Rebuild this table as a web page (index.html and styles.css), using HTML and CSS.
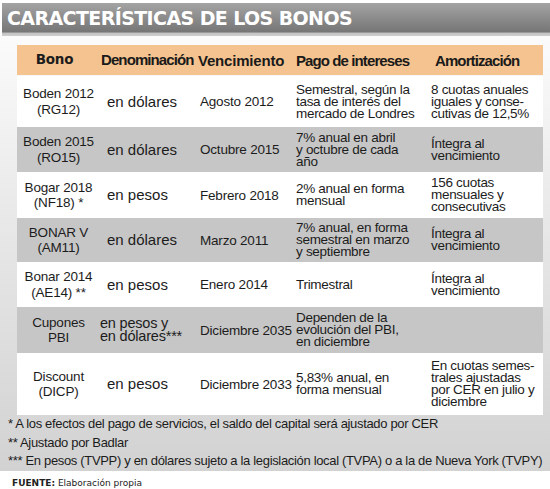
FILE: index.html
```html
<!DOCTYPE html>
<html lang="es">
<head>
<meta charset="utf-8">
<title>Características de los bonos</title>
<link rel="stylesheet" href="styles.css">
</head>
<body>
<div class="page">
  <div class="title">CARACTERÍSTICAS DE LOS BONOS</div>
  <div class="panel">
    <div class="table">
      <div class="row head">
        <div class="cell c-bono h-bono">Bono</div>
        <div class="cell c-den h">Denominación</div>
        <div class="cell c-ven h">Vencimiento</div>
        <div class="cell c-pago h">Pago de&nbsp;intereses</div>
        <div class="cell c-amo h h-amo">Amortización</div>
      </div>
      <div class="row r1">
        <div class="cell c-bono">Boden 2012<br>(RG12)</div>
        <div class="cell c-den">en dólares</div>
        <div class="cell c-ven">Agosto 2012</div>
        <div class="cell c-pago">Semestral, según la<br>tasa de interés del<br>mercado de Londres</div>
        <div class="cell c-amo">8 cuotas anuales<br>iguales y conse-<br>cutivas de 12,5%</div>
      </div>
      <div class="row alt r2">
        <div class="cell c-bono">Boden 2015<br>(RO15)</div>
        <div class="cell c-den">en dólares</div>
        <div class="cell c-ven">Octubre 2015</div>
        <div class="cell c-pago">7% anual en abril<br>y octubre de cada<br>año</div>
        <div class="cell c-amo">Íntegra al<br>vencimiento</div>
      </div>
      <div class="row r3">
        <div class="cell c-bono">Bogar 2018<br>(NF18) *</div>
        <div class="cell c-den">en pesos</div>
        <div class="cell c-ven">Febrero 2018</div>
        <div class="cell c-pago">2% anual en forma<br>mensual</div>
        <div class="cell c-amo">156 cuotas<br>mensuales y<br>consecutivas</div>
      </div>
      <div class="row alt r4">
        <div class="cell c-bono">BONAR V<br>(AM11)</div>
        <div class="cell c-den">en dólares</div>
        <div class="cell c-ven">Marzo 2011</div>
        <div class="cell c-pago">7% anual, en forma<br>semestral en marzo<br>y septiembre</div>
        <div class="cell c-amo">Íntegra al<br>vencimiento</div>
      </div>
      <div class="row r5">
        <div class="cell c-bono">Bonar 2014<br>(AE14) **</div>
        <div class="cell c-den">en pesos</div>
        <div class="cell c-ven">Enero 2014</div>
        <div class="cell c-pago">Trimestral</div>
        <div class="cell c-amo">Íntegra al<br>vencimiento</div>
      </div>
      <div class="row alt r6">
        <div class="cell c-bono">Cupones<br>PBI</div>
        <div class="cell c-den c-den-two">en pesos y<br>en dólares***</div>
        <div class="cell c-ven">Diciembre 2035</div>
        <div class="cell c-pago">Dependen de la<br>evolución del PBI,<br>en diciembre</div>
        <div class="cell c-amo"></div>
      </div>
      <div class="row r7">
        <div class="cell c-bono">Discount<br>(DICP)</div>
        <div class="cell c-den">en pesos</div>
        <div class="cell c-ven">Diciembre 2033</div>
        <div class="cell c-pago">5,83% anual, en<br>forma mensual</div>
        <div class="cell c-amo">En cuotas semes-<br>trales ajustadas<br>por CER en julio y<br>diciembre</div>
      </div>
    </div>
    <div class="notes">
      <p>* A los efectos del pago de servicios, el saldo del capital será ajustado por CER</p>
      <p>** Ajustado por Badlar</p>
      <p>*** En pesos (TVPP) y en dólares sujeto a la legislación local (TVPA) o a la de Nueva York (TVPY)</p>
    </div>
  </div>
  <div class="source"><span class="source-label">FUENTE:</span> Elaboración propia</div>
</div>
</body>
</html>
```
FILE: styles.css
```css
* { box-sizing: border-box; }
html, body { margin: 0; padding: 0; background: #ffffff; }
body { width: 550px; height: 489px; overflow: hidden; font-family: "Liberation Sans", Arial, sans-serif; color: #1c1c1c; }

.page { display: flex; flex-direction: column; }

.title {
  margin: 3px 0 0 2px;
  height: 33px;
  padding: 3px 0 0 5px;
  background: linear-gradient(#a4a4a4 0%, #8c8c8c 45%, #767676 88%, #c2c2c2 91%, #cfcfcf 100%);
  color: #ffffff;
  font-family: "DejaVu Sans", Verdana, sans-serif;
  font-weight: bold;
  font-size: 19px;
  letter-spacing: -0.6px;
  line-height: 24px;
}

.panel {
  background: linear-gradient(#fbfbfb 0%, #e9e9e9 40%, #d2d2d2 100%);
  padding: 9px 7px 0 0;
}

.table { margin-left: 17px; display: flex; flex-direction: column; }

.row {
  display: grid;
  grid-template-columns: 83px 97px 96px 138px 112px;
  background: #ffffff;
}
.row.alt { background: #c6c6c6; }
.row.head { background: #f5c38f; height: 30px; margin-bottom: 1px; }
.r1 { height: 51px; }
.r2 { height: 45px; }
.r3 { height: 46px; }
.r4 { height: 44px; }
.r5 { height: 45px; }
.r6 { height: 46px; }
.r7 { height: 62px; }

.cell { display: flex; align-items: center; font-size: 13px; }

.h { font-weight: bold; font-size: 15px; letter-spacing: -0.9px; color: #1a1a1a; }
.h-bono { font-family: "DejaVu Sans", Verdana, sans-serif; font-weight: bold; font-size: 15px; letter-spacing: 0.8px; padding-right: 8px; }

.c-bono { justify-content: center; text-align: center; font-size: 13.5px; line-height: 15.5px; letter-spacing: -0.2px; }
.c-den { padding-left: 7px; font-size: 15px; line-height: 14px; }
.c-den.h { padding-left: 1px; font-size: 15px; }
.c-den-two { padding-left: 0; font-size: 14.5px; line-height: 13px; letter-spacing: -0.2px; }
.c-ven { padding-left: 3px; font-size: 13.5px; letter-spacing: -0.2px; }
.c-ven.h { padding-left: 1px; font-size: 15px; }
.c-pago { padding-left: 3px; font-size: 13.5px; line-height: 12px; letter-spacing: -0.3px; }
.c-pago.h { font-size: 15px; letter-spacing: -0.9px; line-height: normal; }
.c-amo { padding-left: 0; font-size: 13.5px; line-height: 12px; letter-spacing: -0.3px; }
.h-amo { padding-left: 4px; font-size: 15px; letter-spacing: -0.9px; line-height: normal; }

.notes { padding-left: 8px; }
.notes p { margin: 0; font-size: 13px; line-height: 18.5px; letter-spacing: -0.33px; color: #1c1c1c; white-space: nowrap; }

.source {
  padding: 6px 0 0 12px;
  font-family: "DejaVu Sans", Verdana, sans-serif;
  font-size: 9px;
  line-height: 12px;
  color: #222222;
}
.source-label { font-weight: bold; }
```
